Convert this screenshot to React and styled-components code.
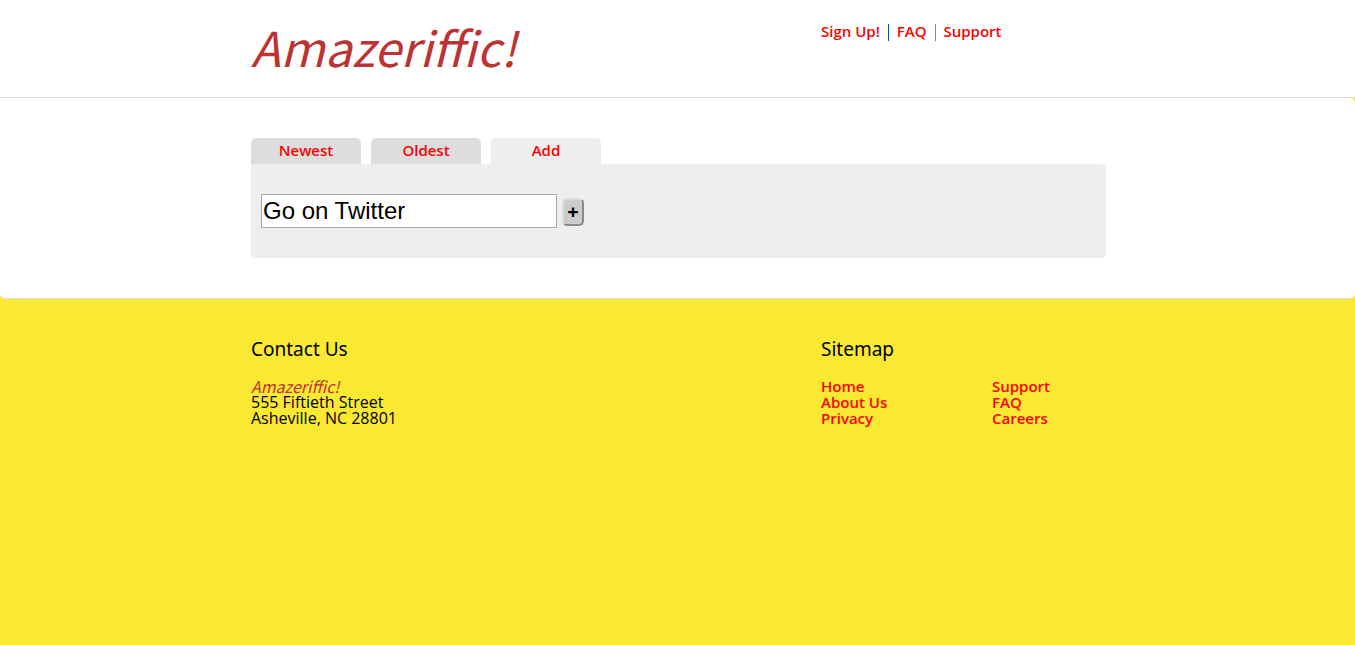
import React, { useState } from "react";
import styled, { createGlobalStyle } from "styled-components";

const bodyFont = '"Open Sans", "Noto Sans", sans-serif';
const headingFont = '"Noto Sans", "Open Sans", sans-serif';
const brandFont = '"Noto Sans CJK SC", "Noto Sans", sans-serif';

const GlobalStyle = createGlobalStyle`
  * { box-sizing: border-box; margin: 0; padding: 0; }
  body {
    background: #f9e933;
    color: #000;
    font: 16px/16px ${bodyFont};
  }
`;

const Container = styled.div`
  max-width: 857px;
  margin: 0 auto;
  padding-left: 2px;
`;

const Columns = styled(Container)`
  display: grid;
  grid-template-columns: 2fr 1fr;
  align-items: start;
`;

const Header = styled.header`
  background: #fff;
  border-bottom: 1px solid #ddd;
  padding: 14px 0 19px;
`;

const Logo = styled.h1`
  font: italic 400 48px/64px ${brandFont};
  color: #b33;
`;

const Link = styled.a`
  color: #f00;
  font-size: 15px;
  font-weight: 600;
  text-decoration: none;
`;

const TopNav = styled.nav`
  display: flex;
  gap: 8px;
  padding-top: 9px;
`;

const Rule = styled.span`
  width: 1px;
  height: 17px;
  margin-top: 1px;
  background: ${(p) => p.$color};
`;

const Main = styled.main`
  background: #fff;
  border-bottom: 1px solid #ddd;
  border-radius: 0 5px 5px 5px;
  padding: 40px 0;
`;

const Tabs = styled.div`
  display: flex;
  gap: 10px;
`;

const Tab = styled.button`
  width: 110px;
  height: 26px;
  padding-bottom: 2px;
  border: 0;
  border-radius: 5px 5px 0 0;
  background: ${(p) => (p.$active ? "#eee" : "#ddd")};
  color: #f00;
  font: 600 15px/22px ${bodyFont};
  cursor: pointer;
`;

const Panel = styled.form`
  display: flex;
  align-items: center;
  gap: 5px;
  padding: 30px 10px;
  background: #eee;
  border-radius: 0 5px 5px 5px;
`;

const TextInput = styled.input`
  width: 296px;
  height: 34px;
  padding: 1px;
  border: 1px solid #a9a9a9;
  background: #fff;
  font: 24px "Liberation Sans", Arial, sans-serif;
  outline: 0;
`;

const AddButton = styled.button`
  width: 22px;
  height: 28px;
  margin-top: 2px;
  border: 2px outset #ddd;
  border-radius: 5px;
  background: #ccc;
  color: #000;
  font: 700 20px/20px ${bodyFont};
`;

const Footer = styled.footer`
  padding: 40px 0;
`;

const Heading = styled.h2`
  margin-bottom: 19px;
  font: 400 19px/20px ${headingFont};
`;

const Address = styled.address`
  font-style: normal;
`;

const Brand = styled.em`
  display: block;
  height: 16px;
  color: #b33;
  font-family: ${brandFont};
`;

const Sitemap = styled.div`
  display: grid;
  grid-template-columns: 3fr 2fr;
`;

const LinkList = styled.ul`
  list-style: none;
`;

const LinkItem = styled.li`
  display: flex;
`;

const Links = ({ names }) => (
  <LinkList>
    {names.map((name) => (
      <LinkItem key={name}><Link href="#">{name}</Link></LinkItem>
    ))}
  </LinkList>
);

export default function App() {
  const [tab, setTab] = useState("Add");
  const [todo, setTodo] = useState("Go on Twitter");
  return (
    <>
      <GlobalStyle />
      <Header>
        <Columns>
          <Logo>Amazeriffic!</Logo>
          <TopNav>
            <Link href="#">Sign Up!</Link>
            <Rule $color="#0055aa" />
            <Link href="#">FAQ</Link>
            <Rule $color="#c08000" />
            <Link href="#">Support</Link>
          </TopNav>
        </Columns>
      </Header>
      <Main>
        <Container>
          <Tabs>
            {["Newest", "Oldest", "Add"].map((name) => (
              <Tab key={name} $active={tab === name} onClick={() => setTab(name)}>{name}</Tab>
            ))}
          </Tabs>
          <Panel onSubmit={(e) => e.preventDefault()}>
            <TextInput aria-label="New to-do" value={todo} onChange={(e) => setTodo(e.target.value)} />
            <AddButton>+</AddButton>
          </Panel>
        </Container>
      </Main>
      <Footer>
        <Columns>
          <section>
            <Heading>Contact Us</Heading>
            <Address>
              <Brand>Amazeriffic!</Brand>
              555 Fiftieth Street<br />
              Asheville, NC 28801
            </Address>
          </section>
          <section>
            <Heading>Sitemap</Heading>
            <Sitemap>
              <Links names={["Home", "About Us", "Privacy"]} />
              <Links names={["Support", "FAQ", "Careers"]} />
            </Sitemap>
          </section>
        </Columns>
      </Footer>
    </>
  );
}
